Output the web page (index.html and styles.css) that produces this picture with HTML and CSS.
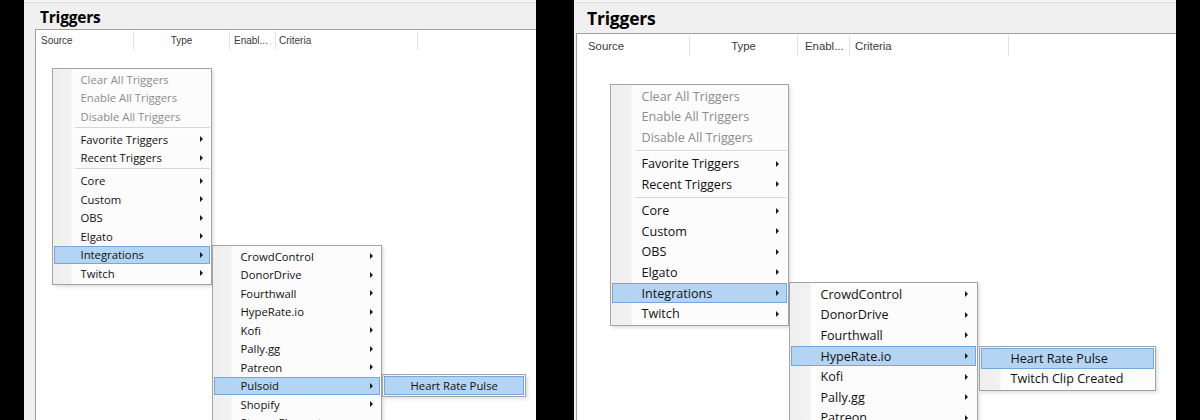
FILE: index.html
```html
<!DOCTYPE html>
<html>
<head>
<meta charset="utf-8">
<link rel="stylesheet" href="styles.css">
</head>
<body>
<div class="stage">
  <section class="panel panel-sm">
    <div class="topline"></div>
    <h1 class="title">Triggers</h1>
    <div class="listview">
      <div class="lv-head">
        <div class="col c-source">Source</div>
        <div class="col c-type">Type</div>
        <div class="col c-enabled">Enabl...</div>
        <div class="col c-criteria">Criteria</div>
      </div>
    </div>

    <div class="menu m1">
      <div class="mi dis">Clear All Triggers</div>
      <div class="mi dis">Enable All Triggers</div>
      <div class="mi dis">Disable All Triggers</div>
      <div class="msep"></div>
      <div class="mi sub">Favorite Triggers</div>
      <div class="mi sub">Recent Triggers</div>
      <div class="msep"></div>
      <div class="mi sub">Core</div>
      <div class="mi sub">Custom</div>
      <div class="mi sub">OBS</div>
      <div class="mi sub">Elgato</div>
      <div class="mi sub hl">Integrations</div>
      <div class="mi sub">Twitch</div>
    </div>

    <div class="menu m2">
      <div class="mi sub">CrowdControl</div>
      <div class="mi sub">DonorDrive</div>
      <div class="mi sub">Fourthwall</div>
      <div class="mi sub">HypeRate.io</div>
      <div class="mi sub">Kofi</div>
      <div class="mi sub">Pally.gg</div>
      <div class="mi sub">Patreon</div>
      <div class="mi sub hl">Pulsoid</div>
      <div class="mi sub">Shopify</div>
      <div class="mi sub">StreamElements</div>
      <div class="mi sub">Streamlabs</div>
    </div>

    <div class="menu m3">
      <div class="mi hl">Heart Rate Pulse</div>
    </div>
  </section>

  <section class="panel panel-lg">
    <div class="topline"></div>
    <h1 class="title">Triggers</h1>
    <div class="listview">
      <div class="lv-head">
        <div class="col c-source">Source</div>
        <div class="col c-type">Type</div>
        <div class="col c-enabled">Enabl...</div>
        <div class="col c-criteria">Criteria</div>
      </div>
    </div>

    <div class="menu m1">
      <div class="mi dis">Clear All Triggers</div>
      <div class="mi dis">Enable All Triggers</div>
      <div class="mi dis">Disable All Triggers</div>
      <div class="msep"></div>
      <div class="mi sub">Favorite Triggers</div>
      <div class="mi sub">Recent Triggers</div>
      <div class="msep"></div>
      <div class="mi sub">Core</div>
      <div class="mi sub">Custom</div>
      <div class="mi sub">OBS</div>
      <div class="mi sub">Elgato</div>
      <div class="mi sub hl">Integrations</div>
      <div class="mi sub">Twitch</div>
    </div>

    <div class="menu m2">
      <div class="mi sub">CrowdControl</div>
      <div class="mi sub">DonorDrive</div>
      <div class="mi sub">Fourthwall</div>
      <div class="mi sub hl">HypeRate.io</div>
      <div class="mi sub">Kofi</div>
      <div class="mi sub">Pally.gg</div>
      <div class="mi sub">Patreon</div>
      <div class="mi sub">Pulsoid</div>
    </div>

    <div class="menu m3">
      <div class="mi hl">Heart Rate Pulse</div>
      <div class="mi">Twitch Clip Created</div>
    </div>
  </section>
</div>
</body>
</html>
```

FILE: styles.css
```css
html, body {
  margin: 0;
  padding: 0;
  background: #000;
}

.stage {
  display: flex;
  width: 1200px;
  height: 420px;
  padding-left: 24px;
  gap: 38px;
  box-sizing: border-box;
  overflow: hidden;
}

.panel {
  position: relative;
  display: flex;
  flex-direction: column;
  height: 420px;
  background: #f0f0f0;
  overflow: hidden;
  flex: none;
}

.panel-sm {
  width: 512px;
  --fs: 11.3px;
  --ih: 18.5px;
  --sep: 4.5px;
  --gut: 19px;
  --tx: 25.5px;
  --ar: 6px;
}

.panel-lg {
  width: 602px;
  --fs: 12.6px;
  --ih: 20.6px;
  --sep: 5.7px;
  --gut: 21px;
  --tx: 28.5px;
  --ar: 7px;
}

.topline {
  height: 3px;
  flex: none;
  background: linear-gradient(#f0f0f0 0 1px, #fbfbfb 1px 2px, #dedede 2px 3px);
}

.title {
  margin: 0;
  flex: none;
  box-sizing: border-box;
  font-family: "Open Sans", "Noto Sans", sans-serif;
  font-weight: 700;
  color: #000;
  letter-spacing: -0.2px;
}

.panel-sm .title {
  height: 26px;
  padding: 2px 0 0 16px;
  font-size: 15.5px;
  line-height: 24px;
}

.panel-lg .title {
  height: 30px;
  padding: 1px 0 0 13px;
  font-size: 17.5px;
  line-height: 29px;
}

.listview {
  flex: 1;
  background: #fff;
  border-top: 1px solid #a0a0a0;
  border-left: 1px solid #a0a0a0;
}

.panel-sm .listview { margin-left: 11px; }
.panel-lg .listview { margin-left: 2px; }

.lv-head {
  display: flex;
  font-family: "Liberation Sans", Arial, sans-serif;
  color: #3a3a3a;
  box-sizing: border-box;
  padding: 1px 0;
}

.panel-sm .lv-head { height: 21px; font-size: 10px; }
.panel-lg .lv-head { height: 23px; font-size: 11.4px; }

.col {
  box-sizing: border-box;
  height: 100%;
  border-right: 1px solid #e3e3e3;
  display: flex;
  align-items: center;
  white-space: nowrap;
}

.c-type { justify-content: center; }

.panel-sm .c-source { width: 98px; padding-left: 5px; }
.panel-sm .c-type { width: 96px; }
.panel-sm .c-enabled { width: 46px; padding-left: 4px; }
.panel-sm .c-criteria { width: 142px; padding-left: 3px; }

.panel-lg .c-source { width: 113px; padding-left: 11px; }
.panel-lg .c-type { width: 108px; }
.panel-lg .c-enabled { width: 52px; padding-left: 7px; }
.panel-lg .c-criteria { width: 159px; padding-left: 5px; }

/* context menus (overlay) */
.menu {
  position: absolute;
  box-sizing: border-box;
  border: 1px solid #a3a3a3;
  padding: 1px;
  background: linear-gradient(90deg, #efefef 0, #f1f1f1 calc(var(--gut) - 2px), #f7f7f7 var(--gut), #fcfcfc var(--gut));
  box-shadow: 2px 2px 3px rgba(0, 0, 0, 0.12);
  font-family: "Open Sans", "Noto Sans", sans-serif;
  font-size: var(--fs);
  color: #111;
}

.mi {
  position: relative;
  box-sizing: border-box;
  height: var(--ih);
  display: flex;
  align-items: center;
  padding-left: var(--tx);
  border: 1px solid transparent;
  white-space: nowrap;
}

.mi.dis { color: #8c8c8c; }

.mi.hl {
  background: #b3d5f3;
  border-color: #73a8df;
}

.mi.sub::after {
  content: "";
  position: absolute;
  right: var(--ar);
  top: 50%;
  transform: translateY(-50%);
  border-left: 3.5px solid #1a1a1a;
  border-top: 3px solid transparent;
  border-bottom: 3px solid transparent;
}

.msep {
  position: relative;
  height: var(--sep);
}

.msep::before {
  content: "";
  position: absolute;
  left: calc(var(--gut) + 2px);
  right: 0;
  top: 50%;
  margin-top: -1px;
  border-top: 1px solid #d7d7d7;
  border-bottom: 1px solid #fff;
}

.panel-sm .m1 { left: 28px; top: 68px; width: 160px; }
.panel-sm .m2 { left: 188px; top: 245px; width: 170px; }
.panel-sm .m3 { left: 358px; top: 374px; width: 144px; }

.panel-lg .m1 { left: 36px; top: 84px; width: 179px; }
.panel-lg .m2 { left: 215px; top: 282px; width: 189px; }
.panel-lg .m3 { left: 405px; top: 346px; width: 177px; }
```
